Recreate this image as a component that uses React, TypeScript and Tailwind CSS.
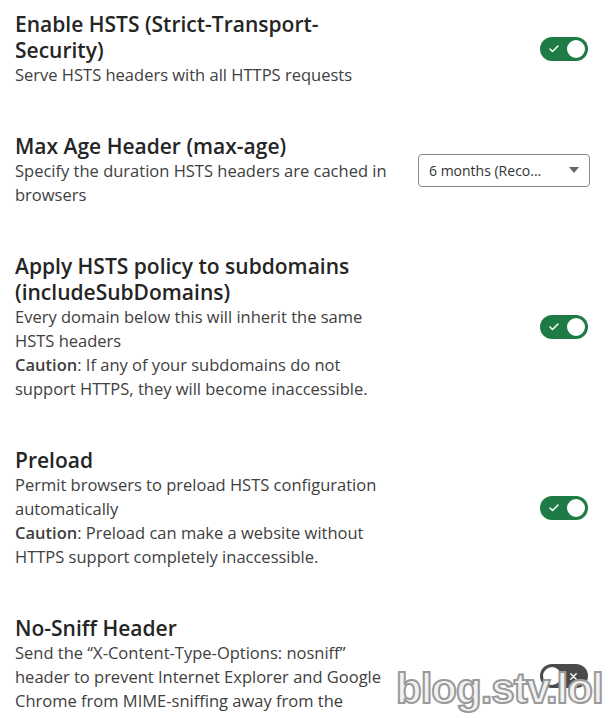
import React from 'react';

function Toggle({ on }: { on: boolean }) {
  if (on) {
    return (
      <div className="relative h-[24px] w-[48px] shrink-0 rounded-full bg-[#1e7b45]">
        <svg width={12} height={12} viewBox="0 0 24 24" fill="none" stroke="#fff" strokeWidth={3} strokeLinecap="round" strokeLinejoin="round" className="absolute left-[8px] top-[6px]" aria-hidden>
          <path d="M20 6 9 17l-5-5" />
        </svg>
        <div className="absolute right-[1px] top-[1px] h-[22px] w-[22px] rounded-full border-2 border-[#1e7b45] bg-white" />
      </div>
    );
  }
  return (
    <div className="relative h-[24px] w-[48px] shrink-0 rounded-full bg-[#4a4a4a]">
      <svg width={11} height={11} viewBox="0 0 24 24" fill="none" stroke="#fff" strokeWidth={3} strokeLinecap="round" className="absolute right-[9px] top-[6.5px]" aria-hidden>
        <path d="M18 6 6 18M6 6l12 12" />
      </svg>
      <div className="absolute left-[1px] top-[1px] h-[22px] w-[22px] rounded-full border-2 border-[#4a4a4a] bg-white" />
    </div>
  );
}

function Select() {
  return (
    <div className="-mr-[2px] flex h-[33px] w-[172px] shrink-0 items-center justify-between rounded-[4px] border border-[#8a8a8a] bg-white pl-[10px] pr-[10px]">
      <span className="text-[14px] text-[#333]">6 months (Reco...</span>
      <svg width={10} height={6} viewBox="0 0 10 6" aria-hidden>
        <path d="M0 0h10L5 6z" fill="#666" />
      </svg>
    </div>
  );
}

type Setting = {
  title: string;
  desc: React.ReactNode;
  control: React.ReactNode;
};

const settings: Setting[] = [
  {
    title: 'Enable HSTS (Strict-Transport-Security)',
    desc: <p>Serve HSTS headers with all HTTPS requests</p>,
    control: <Toggle on />,
  },
  {
    title: 'Max Age Header (max-age)',
    desc: <p>Specify the duration HSTS headers are cached in browsers</p>,
    control: <Select />,
  },
  {
    title: 'Apply HSTS policy to subdomains (includeSubDomains)',
    desc: (
      <>
        <p>Every domain below this will inherit the same HSTS headers</p>
        <p>
          <strong className="font-semibold">Caution</strong>: If any of your subdomains do not support HTTPS, they will become inaccessible.
        </p>
      </>
    ),
    control: <Toggle on />,
  },
  {
    title: 'Preload',
    desc: (
      <>
        <p>Permit browsers to preload HSTS configuration automatically</p>
        <p>
          <strong className="font-semibold">Caution</strong>: Preload can make a website without HTTPS support completely inaccessible.
        </p>
      </>
    ),
    control: <Toggle on />,
  },
  {
    title: 'No-Sniff Header',
    desc: (
      <p>
        Send the “X-Content-Type-Options: nosniff” header to prevent Internet Explorer and Google Chrome from MIME-sniffing away from the declared content-type.
      </p>
    ),
    control: <Toggle on={false} />,
  },
];

export default function App() {
  return (
    <div className="relative h-[718px] overflow-hidden bg-white font-['Open_Sans',sans-serif] text-[#222]">
      <div className="flex flex-col gap-[46px] pl-[15px] pr-[27px] pt-[11px]">
        {settings.map((s) => (
          <div key={s.title} className="flex items-center justify-between gap-4">
            <div className="w-[375px]">
              <h3 className="text-[21px] font-semibold leading-[26px] text-[#252525]">{s.title}</h3>
              <div className="text-[16.5px] leading-[24px] text-[#404040]">{s.desc}</div>
            </div>
            {s.control}
          </div>
        ))}
      </div>
      <div className="pointer-events-none absolute left-[396px] top-[668px] font-['Liberation_Sans',sans-serif] text-[42px] font-bold leading-none tracking-[-1px] text-[#f2f2f2] [-webkit-text-stroke:2px_#9a9a9a]">
        blog.stv.lol
      </div>
    </div>
  );
}
